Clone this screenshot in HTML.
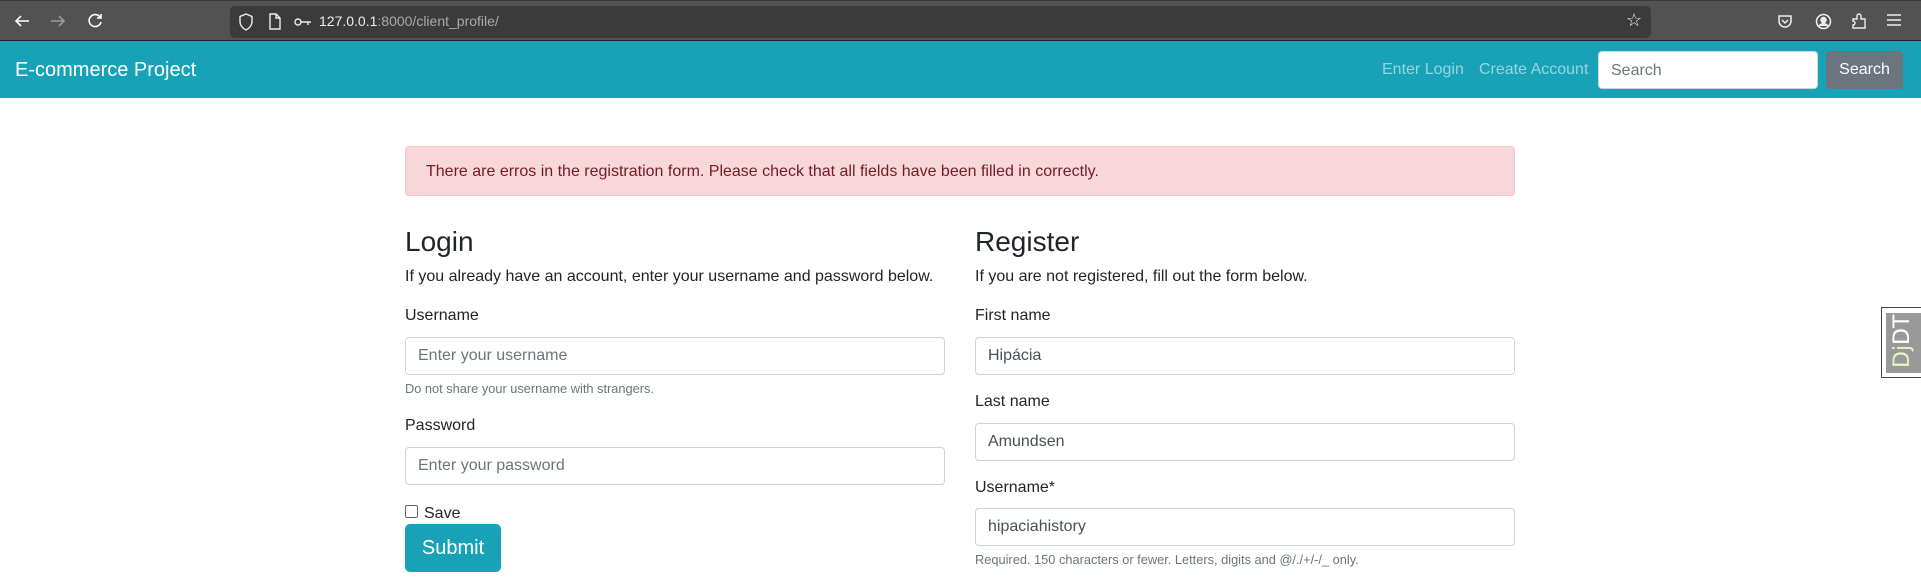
<!DOCTYPE html>
<html><head><meta charset="utf-8"><style>
*{box-sizing:border-box;margin:0;padding:0}
body{width:1921px;height:581px;overflow:hidden;background:#fff;font-family:"Liberation Sans",Arial,sans-serif;color:#212529;position:relative}
.a{position:absolute;white-space:nowrap}
.chrome{position:absolute;left:0;top:0;width:1921px;height:41px;background:#525252;border-top:1px solid #3a3a3a;border-bottom:1px solid #222}
.url{position:absolute;left:230px;top:5px;width:1421px;height:32px;background:#3b3b3b;border-radius:5px}
.nav{position:absolute;left:0;top:41px;width:1921px;height:57px;background:#17a2b8}
.inp{position:absolute;height:38px;border:1px solid #ced4da;border-radius:4px;background:#fff;font-size:16px;padding:0 12px;line-height:36px;color:#495057}
.ph{color:#6c757d}
.lbl{position:absolute;font-size:16px;line-height:24px}
.help{position:absolute;font-size:12.8px;color:#6c757d}
h3{position:absolute;font-weight:500;font-size:28px;line-height:34px}
</style></head><body>
<div class="chrome">
<div class="url"></div>
<svg class="a" style="left:13px;top:11px" width="18" height="18" viewBox="0 0 18 18" fill="none" stroke="#fff" stroke-width="1.6"><path d="M16 9H3M8 4L3 9l5 5"/></svg>
<svg class="a" style="left:49px;top:11px" width="18" height="18" viewBox="0 0 18 18" fill="none" stroke="#999" stroke-width="1.6"><path d="M2 9h13M10 4l5 5-5 5"/></svg>
<svg class="a" style="left:86px;top:11px" width="18" height="18" viewBox="0 0 18 18" fill="none" stroke="#fff" stroke-width="1.6"><path d="M14 5A6 6 0 1 0 15 10M15 2v4h-4"/></svg>
<svg class="a" style="left:238px;top:12px" width="16" height="18" viewBox="0 0 16 18" fill="none" stroke="#eee" stroke-width="1.4"><path d="M8 1L2 3.5v5c0 4 3 7 6 8.5 3-1.5 6-4.5 6-8.5v-5z"/></svg>
<svg class="a" style="left:268px;top:12px" width="14" height="17" viewBox="0 0 14 17" fill="none" stroke="#eee" stroke-width="1.4"><path d="M2 1h6l4 4v11H2zM8 1v4h4"/></svg>
<svg class="a" style="left:294px;top:16px" width="18" height="10" viewBox="0 0 18 10" fill="none" stroke="#eee" stroke-width="1.4"><circle cx="4" cy="5" r="3"/><path d="M7 5h10M14 5v3"/></svg>
<div class="a" style="left:319px;top:12px;font-size:14px;color:#eee">127.0.0.1<span style="color:#aaa">:8000/client_profile/</span></div>
<div class="a" style="left:1626px;top:9px;font-size:18px;color:#eee">☆</div>
<svg class="a" style="left:1777px;top:12px" width="16" height="16" viewBox="0 0 16 16" fill="none" stroke="#eee" stroke-width="1.5"><path d="M2 3h12v5a6 6 0 0 1-12 0z"/><path d="M5 7l3 3 3-3"/></svg>
<svg class="a" style="left:1815px;top:12px" width="17" height="17" viewBox="0 0 17 17" fill="none" stroke="#eee" stroke-width="1.5"><circle cx="8.5" cy="8.5" r="7"/><circle cx="8.5" cy="7" r="2.5" fill="#eee"/><path d="M4 13c2-3 7-3 9 0" fill="#eee"/></svg>
<svg class="a" style="left:1851px;top:11px" width="17" height="18" viewBox="0 0 17 18" fill="none" stroke="#eee" stroke-width="1.4"><path d="M2 7h4V4a2 2 0 0 1 4 0v3h4v9H2v-3a2 2 0 0 0 0-4z"/></svg>
<svg class="a" style="left:1887px;top:13px" width="14" height="12" viewBox="0 0 14 12" stroke="#eee" stroke-width="1.5"><path d="M0 1h14M0 6h14M0 11h14"/></svg>
</div>
<div class="nav">
<div class="a" style="left:15px;top:18px;font-size:20px;color:#fff">E-commerce Project</div>
<div class="a" style="left:1382px;top:20px;font-size:16px;color:rgba(255,255,255,.55)">Enter Login</div>
<div class="a" style="left:1479px;top:20px;font-size:16px;color:rgba(255,255,255,.55)">Create Account</div>
<div class="inp ph" style="left:1598px;top:10px;width:220px;line-height:37px">Search</div>
<div class="a" style="left:1826px;top:10px;width:77px;height:38px;background:#6c757d;border-radius:4px;color:#fff;font-size:16px;line-height:38px;text-align:center">Search</div>
</div>
<div class="a" style="left:405px;top:146px;width:1110px;height:50px;background:#f8d7da;border:1px solid #f5c6cb;border-radius:4px;color:#721c24;font-size:16px;padding:0 20px;line-height:49px">There are erros in the registration form. Please check that all fields have been filled in correctly.</div>

<h3 style="left:405px;top:225px">Login</h3>
<div class="lbl" style="left:405px;top:265px">If you already have an account, enter your username and password below.</div>
<div class="lbl" style="left:405px;top:304px">Username</div>
<div class="inp ph" style="left:405px;top:337px;width:540px">Enter your username</div>
<div class="help" style="left:405px;top:381px">Do not share your username with strangers.</div>
<div class="lbl" style="left:405px;top:414px">Password</div>
<div class="inp ph" style="left:405px;top:447px;width:540px">Enter your password</div>
<div class="a" style="left:405px;top:505px;width:13px;height:13px;border:1.5px solid #666;border-radius:2px"></div>
<div class="lbl" style="left:424px;top:502px">Save</div>
<div class="a" style="left:405px;top:524px;width:96px;height:48px;background:#17a2b8;border-radius:5px;color:#fff;font-size:20px;line-height:48px;text-align:center">Submit</div>

<h3 style="left:975px;top:225px">Register</h3>
<div class="lbl" style="left:975px;top:265px">If you are not registered, fill out the form below.</div>
<div class="lbl" style="left:975px;top:304px">First name</div>
<div class="inp" style="left:975px;top:337px;width:540px">Hipácia</div>
<div class="lbl" style="left:975px;top:390px">Last name</div>
<div class="inp" style="left:975px;top:423px;width:540px">Amundsen</div>
<div class="lbl" style="left:975px;top:476px">Username*</div>
<div class="inp" style="left:975px;top:508px;width:540px">hipaciahistory</div>
<div class="help" style="left:975px;top:552px">Required. 150 characters or fewer. Letters, digits and @/./+/-/_ only.</div>

<div class="a" style="left:1881px;top:307px;width:42px;height:71px;background:#fff;border:1px solid #444;border-right:none"></div>
<div class="a" style="left:1886px;top:313px;width:35px;height:60px;background:#999"></div>
<div class="a" style="left:1889px;top:368px;transform:rotate(-90deg);transform-origin:0 0;font-size:22px;line-height:28px;color:#fff;font-family:'DejaVu Sans',sans-serif"><span style="color:#e6f5c8">Dj</span>DT</div>
</body></html>
